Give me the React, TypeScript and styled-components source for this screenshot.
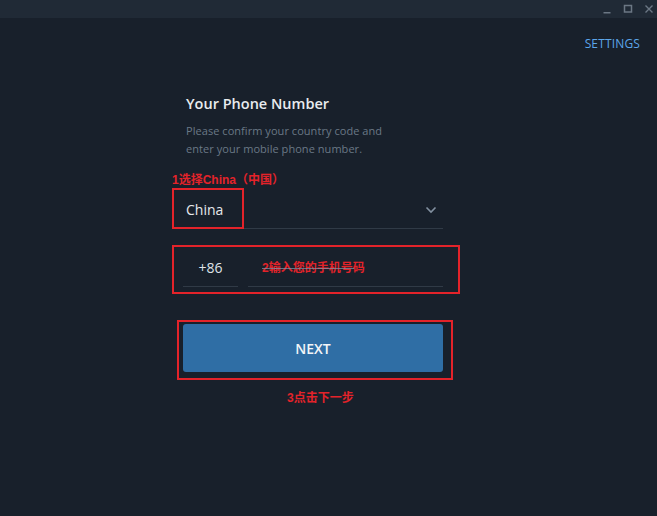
import React from "react";
import styled, { createGlobalStyle } from "styled-components";

const GlobalStyle = createGlobalStyle`
  html, body { margin: 0; padding: 0; background: #18202b; }
  body { font-family: "Open Sans", "Noto Sans", sans-serif; }
  * { box-sizing: border-box; }
`;

const Window = styled.div`
  width: 657px;
  height: 516px;
  background: #18202b;
  display: flex;
  flex-direction: column;
  overflow: hidden;
`;

const TitleBar = styled.div`
  height: 18px;
  background: #202a36;
  display: flex;
  justify-content: flex-end;
  align-items: center;
  gap: 9px;
  padding-right: 2px;
`;

const WinButton = styled.div`
  width: 12px;
  height: 18px;
  display: flex;
  align-items: center;
  justify-content: center;
  color: #6b7784;
`;

const SettingsRow = styled.div`
  height: 50px;
  display: flex;
  justify-content: flex-end;
  align-items: center;
  padding-right: 17px;
`;

const SettingsLink = styled.span`
  color: #5ca6ea;
  font-size: 12px;
  font-weight: 400;
  letter-spacing: 0.15px;
`;

const Form = styled.div`
  position: relative;
  margin-left: 183px;
  width: 260px;
  display: flex;
  flex-direction: column;
`;

const Title = styled.div`
  margin-top: 26px;
  padding-left: 3px;
  color: #e9ecef;
  font-size: 14.5px;
  font-weight: 600;
  line-height: 20px;
`;

const Description = styled.div`
  margin-top: 8px;
  padding-left: 3px;
  color: #6a7886;
  font-size: 11px;
  line-height: 18px;
  letter-spacing: 0.05px;
`;

const Annotation = styled.div<{ $offset: number }>`
  margin-left: ${(p) => p.$offset}px;
  color: #e3232a;
  font-family: "Liberation Sans", "Noto Sans CJK SC", sans-serif;
  font-size: 12px;
  font-weight: 700;
  line-height: 16px;
  white-space: nowrap;
`;

const CountryField = styled.div`
  height: 41px;
  border-bottom: 1px solid #303a46;
  display: flex;
  align-items: center;
  justify-content: space-between;
  padding: 3px 6px 0 3px;
  color: #e6e9ec;
  font-size: 14px;
`;

const PhoneRow = styled.div`
  margin-top: 18px;
  height: 40px;
  display: flex;
  gap: 10px;
`;

const CodeField = styled.div`
  width: 55px;
  border-bottom: 1px solid #303a46;
  display: flex;
  align-items: center;
  justify-content: center;
  padding-top: 2px;
  color: #dfe3e7;
  font-size: 14px;
`;

const NumberField = styled.div`
  flex: 1;
  border-bottom: 1px solid #303a46;
  display: flex;
  align-items: center;
  padding: 2px 0 0 14px;
`;

const Placeholder = styled.span`
  position: relative;
  color: #e3232a;
  font-family: "Liberation Sans", "Noto Sans CJK SC", sans-serif;
  font-size: 12px;
  font-weight: 700;
  line-height: 16px;
  &::after {
    content: "";
    position: absolute;
    left: 0;
    width: 92px;
    top: 8px;
    height: 1px;
    background: rgba(130, 150, 170, 0.7);
  }
`;

const NextButton = styled.button`
  margin-top: 37px;
  height: 48px;
  width: 260px;
  border: none;
  border-radius: 3px;
  background: #2f6ea5;
  color: #f2f5f8;
  font-family: "Open Sans", sans-serif;
  font-size: 14px;
  font-weight: 600;
  cursor: pointer;
`;

const FooterAnnotation = styled(Annotation)`
  margin-top: 18px;
`;

const RedBox = styled.div<{ $top: number; $left: number; $w: number; $h: number }>`
  position: absolute;
  top: ${(p) => p.$top}px;
  left: ${(p) => p.$left}px;
  width: ${(p) => p.$w}px;
  height: ${(p) => p.$h}px;
  border: 2px solid #e3232a;
  pointer-events: none;
`;

export default function App() {
  return (
    <>
      <GlobalStyle />
      <Window>
        <TitleBar>
          <WinButton>
            <svg width="10" height="10" viewBox="0 0 10 10">
              <rect x="1.5" y="8" width="7" height="1.5" fill="currentColor" />
            </svg>
          </WinButton>
          <WinButton>
            <svg width="10" height="10" viewBox="0 0 10 10">
              <rect x="1.5" y="1.5" width="7" height="6.5" fill="none" stroke="currentColor" strokeWidth="1.5" />
            </svg>
          </WinButton>
          <WinButton>
            <svg width="10" height="10" viewBox="0 0 10 10">
              <path d="M1.5 1.5 L8.5 8.5 M8.5 1.5 L1.5 8.5" stroke="currentColor" strokeWidth="1.4" />
            </svg>
          </WinButton>
        </TitleBar>
        <SettingsRow>
          <SettingsLink>SETTINGS</SettingsLink>
        </SettingsRow>
        <Form>
          <Title>Your Phone Number</Title>
          <Description>
            Please confirm your country code and
            <br />
            enter your mobile phone number.
          </Description>
          <Annotation $offset={-11} style={{ marginTop: 14 }}>1选择China（中国）</Annotation>
          <CountryField>
            <span>China</span>
            <svg width="12" height="8" viewBox="0 0 12 8">
              <path d="M1.5 1.5 L6 6 L10.5 1.5" fill="none" stroke="#8290a0" strokeWidth="1.6" />
            </svg>
          </CountryField>
          <PhoneRow>
            <CodeField>+86</CodeField>
            <NumberField>
              <Placeholder>2输入您的手机号码</Placeholder>
            </NumberField>
          </PhoneRow>
          <NextButton>NEXT</NextButton>
          <FooterAnnotation $offset={104}>3点击下一步</FooterAnnotation>
          <RedBox $top={120} $left={-11} $w={72} $h={41} />
          <RedBox $top={177} $left={-11} $w={288} $h={49} />
          <RedBox $top={252} $left={-6} $w={276} $h={60} />
        </Form>
      </Window>
    </>
  );
}
